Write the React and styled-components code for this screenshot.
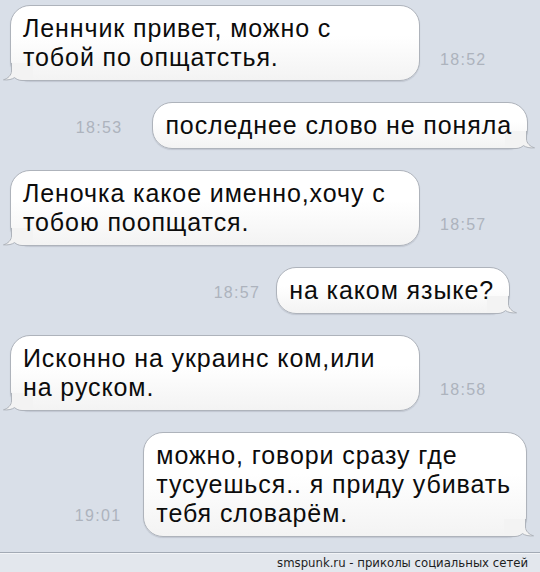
import React from "react";
import styled, { createGlobalStyle } from "styled-components";

const GlobalStyle = createGlobalStyle`
  html, body {
    margin: 0;
    padding: 0;
    background: #d9dfe8;
  }
  * { box-sizing: border-box; }
`;

const Screen = styled.div`
  width: 540px;
  height: 572px;
  display: flex;
  flex-direction: column;
  overflow: hidden;
  background: #d9dfe8;
  font-family: "Liberation Sans", Arial, sans-serif;
`;

const Thread = styled.div`
  flex: 1;
  display: flex;
  flex-direction: column;
  gap: 21px;
  padding-top: 5px;
`;

const Row = styled.div`
  display: flex;
  align-items: flex-end;
  justify-content: ${(p) => (p.$out ? "flex-end" : "flex-start")};
  gap: ${(p) => p.$gap}px;
  padding: ${(p) => (p.$out ? `0 ${p.$mr}px 0 0` : "0 0 0 10px")};
`;

const Bubble = styled.div`
  position: relative;
  flex-shrink: 0;
  width: ${(p) => (p.$out ? "auto" : "410px")};
  padding: ${(p) => (p.$out ? "8px 15px 8px 12px" : "8px 14px 8px 12px")};
  background: linear-gradient(#ffffff 40%, #f3f3f3);
  border: 1px solid #aeb3bb;
  border-radius: 20px;
  box-shadow: 0 1px 1px rgba(60, 70, 90, 0.16);
`;

const Text = styled.div`
  position: relative;
  z-index: 1;
  color: #0c0c0c;
  font-size: 25px;
  letter-spacing: 0.9px;
  line-height: 29px;
  white-space: nowrap;
`;

const TailSvg = styled.svg`
  position: absolute;
  bottom: -1px;
  ${(p) => (p.$out ? "right: -8px; transform: scaleX(-1);" : "left: -8px;")}
`;

const Time = styled.div`
  flex-shrink: 0;
  margin-bottom: 12px;
  color: #adb3bd;
  font-size: 16px;
  letter-spacing: 1.3px;
  line-height: 18px;
`;

const Footer = styled.div`
  height: 20px;
  border-top: 1px solid #a3aab5;
  box-shadow: inset 0 1px 0 #f2f4f7;
  background: #e3e7ed;
  display: flex;
  align-items: center;
  justify-content: flex-end;
  padding-right: 12px;
  font-family: "DejaVu Sans Condensed", "DejaVu Sans", sans-serif;
  font-stretch: condensed;
  font-size: 13px;
  color: #1e1e1e;
`;

const Tail = ({ out }) => (
  <TailSvg $out={out} width="30" height="18" viewBox="0 0 30 18">
    <path
      d="M8 0 V8 C8 12 5 15.5 0.5 16.8 C5 17.4 9.5 16.2 11.5 14.6 C13.5 16.3 16 17.5 19 17.5 H30 V0 Z"
      fill="#f3f3f3"
    />
    <path
      d="M8.5 0 V8 C8.5 12 5 15.5 0.5 16.8 C5 17.4 9.5 16.2 11.5 14.6 C13.5 16.3 16 17.5 19 17.5 H30"
      fill="none"
      stroke="#aeb3bb"
    />
  </TailSvg>
);

const messages = [
  { lines: ["Леннчик привет, можно с", "тобой по опщатстья."], time: "18:52" },
  { out: true, lines: ["последнее слово не поняла"], time: "18:53", mr: 12, gap: 30 },
  { lines: ["Леночка какое именно,хочу с", "тобою поопщатся."], time: "18:57" },
  { out: true, lines: ["на каком языке?"], time: "18:57", mr: 30, gap: 16 },
  { lines: ["Исконно на украинс ком,или", "на руском."], time: "18:58" },
  {
    out: true,
    lines: ["можно, говори сразу где", "тусуешься.. я приду убивать", "тебя словарём."],
    time: "19:01",
    mr: 13,
    gap: 22,
  },
];

export default function App() {
  return (
    <Screen>
      <GlobalStyle />
      <Thread>
        {messages.map((m, i) => (
          <Row key={i} $out={m.out} $mr={m.mr} $gap={m.gap || 20}>
            {m.out && <Time>{m.time}</Time>}
            <Bubble $out={m.out}>
              <Text>
                {m.lines.map((l, j) => (
                  <div key={j}>{l}</div>
                ))}
              </Text>
              <Tail out={m.out} />
            </Bubble>
            {!m.out && <Time>{m.time}</Time>}
          </Row>
        ))}
      </Thread>
      <Footer>smspunk.ru - приколы социальных сетей</Footer>
    </Screen>
  );
}
